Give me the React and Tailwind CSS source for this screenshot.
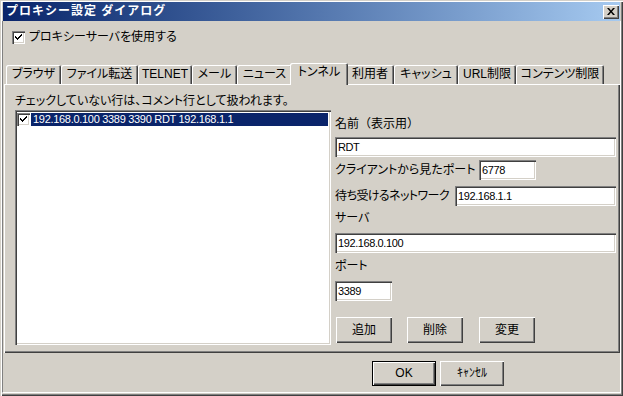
import React from 'react';

const tabs = [
  { label: 'ブラウザ', w: 'w-[55px]' },
  { label: 'ファイル転送', w: 'w-[77px]' },
  { label: 'TELNET', w: 'w-[54px]' },
  { label: 'メール', w: 'w-[45px]' },
  { label: 'ニュース', w: 'w-[55px]' },
  { label: 'トンネル', w: 'w-[58px]', active: true },
  { label: '利用者', w: 'w-[48px]' },
  { label: 'キャッシュ', w: 'w-[64px]' },
  { label: 'URL制限', w: 'w-[58px]' },
  { label: 'コンテンツ制限', w: 'w-[88px]' },
];

const raised = 'bg-[#d4d0c8] shadow-[inset_1px_1px_0_#fff,inset_-1px_-1px_0_#404040,inset_-2px_-2px_0_#808080]';
const sunken = 'bg-white shadow-[inset_1px_1px_0_#808080,inset_2px_2px_0_#404040,inset_-1px_-1px_0_#fff,inset_-2px_-2px_0_#d4d0c8]';

function Check() {
  return (
    <svg width="7" height="7" viewBox="0 0 7 7" className="block">
      <path d="M0 2h1v1h1v1h1V3h1V2h1V1h1V0h1v2H6v1H5v1H4v1H3v1H2V5H1V4H0z" fill="#000" />
    </svg>
  );
}

function CheckBox() {
  return (
    <div className={`${sunken} w-[13px] h-[13px] flex items-center justify-center shrink-0`}>
      <Check />
    </div>
  );
}

function Field({ value, className }) {
  return (
    <div className={`${sunken} h-[20px] pl-[3px] flex items-center shrink-0 text-[11px] tracking-[-0.4px] text-black ${className}`}>
      {value}
    </div>
  );
}

function Button({ children, className }) {
  return (
    <button className={`${raised} h-[26px] w-[56px] flex items-center justify-center text-[12px] text-black ${className}`}>
      {children}
    </button>
  );
}

export default function App() {
  return (
    <div className="w-[623px] h-[396px] bg-[#d4d0c8] flex flex-col pt-[2px] px-[2px] pb-[3px] font-['Liberation_Sans','Noto_Sans_CJK_JP',sans-serif] [font-feature-settings:'palt'] text-[12px] leading-[13px] text-black shadow-[inset_1px_1px_0_#d4d0c8,inset_2px_2px_0_#fff,inset_-1px_-1px_0_#404040,inset_-2px_-2px_0_#808080] overflow-hidden select-none">
      {/* Title bar */}
      <div className="h-[19px] mx-[1px] flex items-center justify-between bg-gradient-to-r from-[#0a246a] to-[#a6caf0]">
        <span className="pl-[3px] text-white font-bold text-[12px] tracking-[1px] [font-feature-settings:normal]">プロキシー設定 ダイアログ</span>
        <div className={`${raised} w-[16px] h-[14px] mr-[1px] flex items-center justify-center`}>
          <svg width="8" height="7" viewBox="0 0 8 7">
            <path d="M0 0h2l2 2.5L6 0h2L5 3.5 8 7H6L4 4.5 2 7H0l3-3.5z" fill="#000" />
          </svg>
        </div>
      </div>

      {/* Client area */}
      <div className="flex-1 flex flex-col border-l border-l-[#808080] border-r border-r-white border-b border-b-white">
        <div className="mt-[10px] ml-[9px] flex items-center gap-[4px] h-[13px]">
          <CheckBox />
          <span>プロキシーサーバを使用する</span>
        </div>

        {/* Tabs */}
        <div className="mt-[19px] h-[21px] pl-[3px] flex items-end">
          {tabs.map((t) =>
            t.active ? (
              <div
                key={t.label}
                className={`${t.w} relative z-10 -mx-[2px] -mb-px h-[22px] pb-[3px] flex items-center justify-center bg-[#d4d0c8] rounded-t-[2px] shadow-[inset_1px_1px_0_#fff,inset_-1px_0_0_#404040,inset_-2px_0_0_#808080]`}
              >
                {t.label}
              </div>
            ) : (
              <div
                key={t.label}
                className={`${t.w} h-[19px] flex items-center justify-center bg-[#d4d0c8] rounded-t-[2px] shadow-[inset_1px_1px_0_#fff,inset_-1px_0_0_#404040,inset_-2px_0_0_#808080]`}
              >
                {t.label}
              </div>
            )
          )}
        </div>

        {/* Tab page */}
        <div className="ml-[1px] w-[616px] h-[269px] flex bg-[#d4d0c8] shadow-[inset_1px_1px_0_#fff,inset_-1px_-1px_0_#404040,inset_-2px_-2px_0_#808080]">
          <div className="ml-[11px] w-[316px] flex flex-col">
            <div className="mt-[11px] h-[13px] whitespace-nowrap">チェックしていない行は、コメント行として扱われます。</div>
            <div className={`${sunken} mt-[2px] h-[235px] p-[2px]`}>
              <div className="flex items-center h-[13px] mt-[1px]">
                <CheckBox />
                <div className="ml-[1px] mr-[1px] flex-1 h-[13px] bg-[#0a246a] text-white text-[11px] tracking-[-0.3px] pl-[2px] flex items-center">
                  192.168.0.100 3389 3390 RDT 192.168.1.1
                </div>
              </div>
            </div>
          </div>

          <div className="ml-[4px] w-[281px] flex flex-col">
            <div className="mt-[34px] h-[13px] whitespace-nowrap">名前<span className="[font-feature-settings:normal]">（</span>表示用<span className="[font-feature-settings:normal]">）</span></div>
            <Field value="RDT" className="mt-[6px] w-[281px]" />
            <div className="mt-[3px] flex items-center">
              <span className="w-[144px] whitespace-nowrap">クライアントから見たポート</span>
              <Field value="6778" className="w-[57px]" />
            </div>
            <div className="mt-[6px] flex items-center">
              <span className="w-[120px] whitespace-nowrap tracking-[-0.6px]">待ち受けるネットワーク</span>
              <Field value="192.168.1.1" className="w-[161px]" />
            </div>
            <div className="mt-[6px] h-[13px]">サーバ</div>
            <Field value="192.168.0.100" className="mt-[8px] w-[281px]" />
            <div className="mt-[7px] h-[13px]">ポート</div>
            <Field value="3389" className="mt-[8px] w-[57px]" />
            <div className="mt-[16px] flex">
              <Button className="ml-[1px]">追加</Button>
              <Button className="ml-[15px]">削除</Button>
              <Button className="ml-[16px]">変更</Button>
            </div>
          </div>
        </div>

        {/* Bottom buttons */}
        <div className="flex-1 flex items-start pt-[8px] pl-[369px]">
          <div className="w-[64px] h-[25px] border border-black">
            <button className={`${raised} w-full h-full flex items-center justify-center text-[12px]`}>OK</button>
          </div>
          <button className={`${raised} ml-[4px] w-[64px] h-[25px] flex items-center justify-center text-[12px]`}>ｷｬﾝｾﾙ</button>
        </div>
      </div>
    </div>
  );
}
